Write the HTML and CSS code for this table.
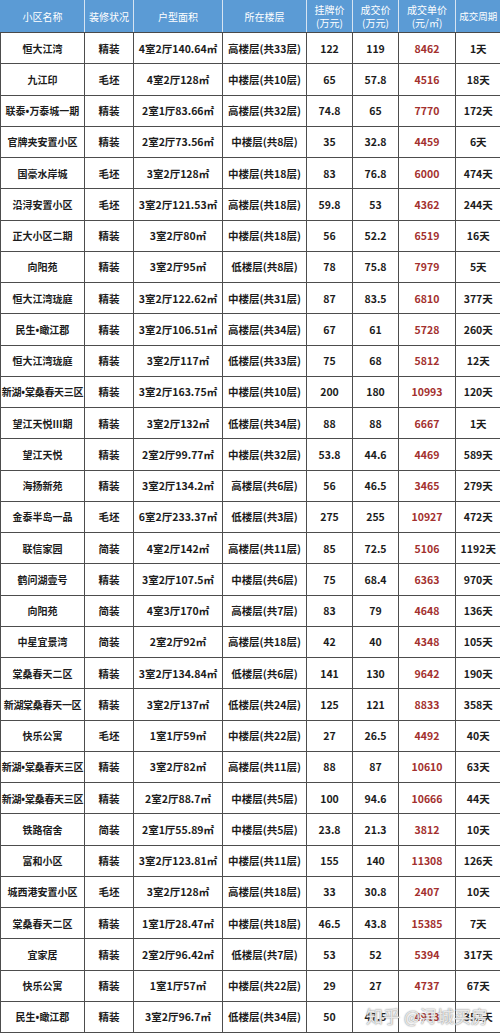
FILE: index.html
```html
<!DOCTYPE html>
<html lang="zh-CN">
<head>
<meta charset="utf-8">
<title>成交数据</title>
<link rel="stylesheet" href="styles.css">
</head>
<body>
<div class="wrap">
<table class="deals">
<colgroup>
<col class="c1"><col class="c2"><col class="c3"><col class="c4"><col class="c5"><col class="c6"><col class="c7"><col class="c8">
</colgroup>
<thead>
<tr><th>小区名称</th><th>装修状况</th><th>户型面积</th><th>所在楼层</th><th>挂牌价<br>(万元)</th><th>成交价<br>(万元)</th><th>成交单价<br>(元/㎡)</th><th>成交周期</th></tr>
</thead>
<tbody>
<tr><td>恒大江湾</td><td>精装</td><td>4室2厅140.64㎡</td><td>高楼层(共33层)</td><td>122</td><td>119</td><td class="red">8462</td><td>1天</td></tr>
<tr><td>九江印</td><td>毛坯</td><td>4室2厅128㎡</td><td>中楼层(共10层)</td><td>65</td><td>57.8</td><td class="red">4516</td><td>18天</td></tr>
<tr><td>联泰<span class="dot">•</span>万泰城一期</td><td>精装</td><td>2室1厅83.66㎡</td><td>高楼层(共32层)</td><td>74.8</td><td>65</td><td class="red">7770</td><td>172天</td></tr>
<tr><td>官牌夹安置小区</td><td>精装</td><td>2室2厅73.56㎡</td><td>中楼层(共8层)</td><td>35</td><td>32.8</td><td class="red">4459</td><td>6天</td></tr>
<tr><td>国豪水岸城</td><td>毛坯</td><td>3室2厅128㎡</td><td>中楼层(共18层)</td><td>83</td><td>76.8</td><td class="red">6000</td><td>474天</td></tr>
<tr><td>沿浔安置小区</td><td>毛坯</td><td>3室2厅121.53㎡</td><td>高楼层(共18层)</td><td>59.8</td><td>53</td><td class="red">4362</td><td>244天</td></tr>
<tr><td>正大小区二期</td><td>精装</td><td>3室2厅80㎡</td><td>中楼层(共18层)</td><td>56</td><td>52.2</td><td class="red">6519</td><td>16天</td></tr>
<tr><td>向阳苑</td><td>精装</td><td>3室2厅95㎡</td><td>低楼层(共8层)</td><td>78</td><td>75.8</td><td class="red">7979</td><td>5天</td></tr>
<tr><td>恒大江湾珑庭</td><td>精装</td><td>3室2厅122.62㎡</td><td>中楼层(共31层)</td><td>87</td><td>83.5</td><td class="red">6810</td><td>377天</td></tr>
<tr><td>民生<span class="dot">•</span>瞰江郡</td><td>精装</td><td>3室2厅106.51㎡</td><td>高楼层(共34层)</td><td>67</td><td>61</td><td class="red">5728</td><td>260天</td></tr>
<tr><td>恒大江湾珑庭</td><td>精装</td><td>3室2厅117㎡</td><td>低楼层(共33层)</td><td>75</td><td>68</td><td class="red">5812</td><td>12天</td></tr>
<tr><td class="long">新湖<span class="dot">•</span>棠桑春天三区</td><td>精装</td><td>3室2厅163.75㎡</td><td>中楼层(共10层)</td><td>200</td><td>180</td><td class="red">10993</td><td>120天</td></tr>
<tr><td>望江天悦Ⅲ期</td><td>精装</td><td>3室2厅132㎡</td><td>低楼层(共34层)</td><td>88</td><td>88</td><td class="red">6667</td><td>1天</td></tr>
<tr><td>望江天悦</td><td>精装</td><td>2室2厅99.77㎡</td><td>中楼层(共32层)</td><td>53.8</td><td>44.6</td><td class="red">4469</td><td>589天</td></tr>
<tr><td>海扬新苑</td><td>精装</td><td>3室2厅134.2㎡</td><td>高楼层(共6层)</td><td>56</td><td>46.5</td><td class="red">3465</td><td>279天</td></tr>
<tr><td>金泰半岛一品</td><td>毛坯</td><td>6室2厅233.37㎡</td><td>低楼层(共3层)</td><td>275</td><td>255</td><td class="red">10927</td><td>472天</td></tr>
<tr><td>联信家园</td><td>简装</td><td>4室2厅142㎡</td><td>高楼层(共11层)</td><td>85</td><td>72.5</td><td class="red">5106</td><td>1192天</td></tr>
<tr><td>鹤问湖壹号</td><td>精装</td><td>3室2厅107.5㎡</td><td>中楼层(共6层)</td><td>75</td><td>68.4</td><td class="red">6363</td><td>970天</td></tr>
<tr><td>向阳苑</td><td>简装</td><td>4室3厅170㎡</td><td>高楼层(共7层)</td><td>83</td><td>79</td><td class="red">4648</td><td>136天</td></tr>
<tr><td>中星宜景湾</td><td>简装</td><td>2室2厅92㎡</td><td>高楼层(共18层)</td><td>42</td><td>40</td><td class="red">4348</td><td>105天</td></tr>
<tr><td>棠桑春天二区</td><td>精装</td><td>3室2厅134.84㎡</td><td>低楼层(共6层)</td><td>141</td><td>130</td><td class="red">9642</td><td>190天</td></tr>
<tr><td class="long">新湖棠桑春天一区</td><td>精装</td><td>3室2厅137㎡</td><td>低楼层(共24层)</td><td>125</td><td>121</td><td class="red">8833</td><td>358天</td></tr>
<tr><td>快乐公寓</td><td>毛坯</td><td>1室1厅59㎡</td><td>中楼层(共22层)</td><td>27</td><td>26.5</td><td class="red">4492</td><td>40天</td></tr>
<tr><td class="long">新湖<span class="dot">•</span>棠桑春天三区</td><td>精装</td><td>3室2厅82㎡</td><td>高楼层(共11层)</td><td>88</td><td>87</td><td class="red">10610</td><td>63天</td></tr>
<tr><td class="long">新湖<span class="dot">•</span>棠桑春天三区</td><td>精装</td><td>2室2厅88.7㎡</td><td>中楼层(共5层)</td><td>100</td><td>94.6</td><td class="red">10666</td><td>44天</td></tr>
<tr><td>铁路宿舍</td><td>简装</td><td>2室1厅55.89㎡</td><td>中楼层(共5层)</td><td>23.8</td><td>21.3</td><td class="red">3812</td><td>10天</td></tr>
<tr><td>富和小区</td><td>精装</td><td>3室2厅123.81㎡</td><td>中楼层(共11层)</td><td>155</td><td>140</td><td class="red">11308</td><td>126天</td></tr>
<tr><td>城西港安置小区</td><td>毛坯</td><td>3室2厅128㎡</td><td>高楼层(共18层)</td><td>33</td><td>30.8</td><td class="red">2407</td><td>10天</td></tr>
<tr><td>棠桑春天二区</td><td>精装</td><td>1室1厅28.47㎡</td><td>中楼层(共18层)</td><td>46.5</td><td>43.8</td><td class="red">15385</td><td>7天</td></tr>
<tr><td>宜家居</td><td>精装</td><td>2室2厅96.42㎡</td><td>低楼层(共7层)</td><td>53</td><td>52</td><td class="red">5394</td><td>317天</td></tr>
<tr><td>快乐公寓</td><td>精装</td><td>1室1厅57㎡</td><td>中楼层(共22层)</td><td>29</td><td>27</td><td class="red">4737</td><td>67天</td></tr>
<tr><td>民生<span class="dot">•</span>瞰江郡</td><td>精装</td><td>3室2厅96.7㎡</td><td>低楼层(共34层)</td><td>50</td><td>47.5</td><td class="red">4913</td><td>352天</td></tr>
</tbody>
</table>
<div class="mark">知乎 @浔城买房</div>
</div>
</body>
</html>
```

FILE: styles.css
```css
html, body {
  margin: 0;
  padding: 0;
  background: #ffffff;
}
.wrap {
  position: relative;
  width: 500px;
  height: 1034px;
  overflow: hidden;
}
.deals {
  width: 500px;
  table-layout: fixed;
  border-collapse: collapse;
  font-family: "Noto Sans CJK SC", "Noto Sans", sans-serif;
}
.c1 { width: 84px; }
.c2 { width: 49px; }
.c3 { width: 89px; }
.c4 { width: 84px; }
.c5 { width: 46px; }
.c6 { width: 46px; }
.c7 { width: 57px; }
.c8 { width: 45px; }
.deals th {
  height: 32px;
  padding: 0;
  background: #5b9bd5;
  color: #ffffff;
  font-weight: 400;
  font-size: 10px;
  line-height: 13px;
  text-align: center;
  white-space: nowrap;
  border-left: 1px solid #d6e4f2;
  border-bottom: 1px solid #4a4a4a;
}
.deals th:first-child {
  border-left: 1px solid #5b9bd5;
}
.deals th:last-child {
  font-size: 9.5px;
}
.deals td {
  height: 30.25px;
  padding: 0;
  text-align: center;
  font-size: 10.5px;
  font-weight: 700;
  color: #1c1c1c;
  white-space: nowrap;
  border: 1px solid #4d4d4d;
  border-top: none;
}
.deals td:first-child {
  border-left: 1px solid #4d4d4d;
  font-size: 10px;
}
.deals td.long {
  letter-spacing: -0.3px;
}
.deals td:last-child { border-right: none; }
.deals .red {
  color: #a3302e;
}
.dot {
  font-family: "Noto Sans", sans-serif;
  letter-spacing: 0;
}
.mark {
  position: absolute;
  right: 12px;
  bottom: 6px;
  font-family: "Noto Sans CJK SC", sans-serif;
  font-size: 17px;
  color: rgba(255, 255, 255, 0.8);
  text-shadow: 0 0 1px #909090, 0 0 2px #a0a0a0;
}
```
